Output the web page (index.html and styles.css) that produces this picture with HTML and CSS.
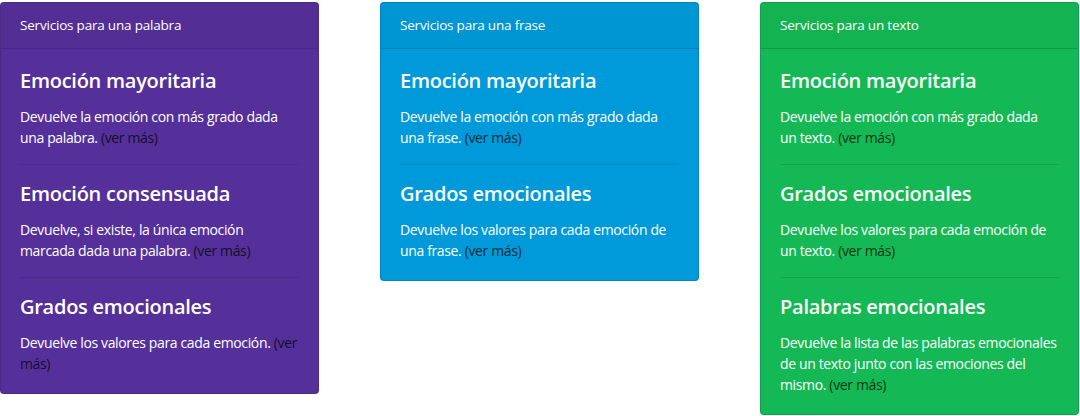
FILE: index.html
```html
<!DOCTYPE html>
<html lang="es">
<head>
<meta charset="utf-8">
<title>Servicios</title>
<link rel="stylesheet" href="styles.css">
</head>
<body>
<div class="row">
  <div class="card card-purple">
    <div class="card-header">Servicios para una palabra</div>
    <div class="card-body">
      <h5 class="card-title">Emoción mayoritaria</h5>
      <p class="card-text">Devuelve la emoción con más grado dada una palabra. <a class="more" href="#">(ver más)</a></p>
      <hr>
      <h5 class="card-title">Emoción consensuada</h5>
      <p class="card-text">Devuelve, si existe, la única emoción marcada dada una palabra. <a class="more" href="#">(ver más)</a></p>
      <hr>
      <h5 class="card-title">Grados emocionales</h5>
      <p class="card-text">Devuelve los valores para cada emoción. <a class="more" href="#">(ver más)</a></p>
    </div>
  </div>
  <div class="card card-blue">
    <div class="card-header">Servicios para una frase</div>
    <div class="card-body">
      <h5 class="card-title">Emoción mayoritaria</h5>
      <p class="card-text">Devuelve la emoción con más grado dada una frase. <a class="more" href="#">(ver más)</a></p>
      <hr>
      <h5 class="card-title">Grados emocionales</h5>
      <p class="card-text">Devuelve los valores para cada emoción de una frase. <a class="more" href="#">(ver más)</a></p>
    </div>
  </div>
  <div class="card card-green">
    <div class="card-header">Servicios para un texto</div>
    <div class="card-body">
      <h5 class="card-title">Emoción mayoritaria</h5>
      <p class="card-text">Devuelve la emoción con más grado dada <span class="nowrap">un texto.</span> <a class="more" href="#">(ver más)</a></p>
      <hr>
      <h5 class="card-title">Grados emocionales</h5>
      <p class="card-text">Devuelve los valores para cada emoción de un texto. <a class="more" href="#">(ver más)</a></p>
      <hr>
      <h5 class="card-title">Palabras emocionales</h5>
      <p class="card-text">Devuelve la lista de las palabras emocionales de un texto junto con las emociones del mismo. <a class="more" href="#">(ver más)</a></p>
    </div>
  </div>
</div>
</body>
</html>
```
FILE: styles.css
```css
* { box-sizing: border-box; }
html, body { margin: 0; padding: 0; background: #fff; }
body {
  font-family: "Open Sans", "Noto Sans", "DejaVu Sans", sans-serif;
  font-size: 14px;
  line-height: 1.5;
  color: #fff;
  padding-top: 2px;
}
.row {
  display: grid;
  grid-template-columns: repeat(3, 319px);
  column-gap: 61px;
  align-items: start;
}
.card {
  border: 1px solid rgba(0,0,0,.125);
  border-radius: 4px;
  overflow: hidden;
}
.card-purple { background: #55309a; }
.card-blue { background: #009ada; }
.card-green { background: #14b955; }
.card-header {
  padding: 12px 19px;
  background: rgba(0,0,0,.03);
  border-bottom: 1px solid rgba(0,0,0,.125);
  font-size: 13.5px;
  letter-spacing: -0.2px;
  line-height: 21px;
}
.card-body {
  padding: 20px 19px 19px;
}
.card-title {
  margin: 0 0 13px;
  font-size: 20px;
  line-height: 24px;
  font-weight: 600;
  letter-spacing: -0.26px;
}
.card-text {
  margin: 0;
  font-size: 14px;
  line-height: 21px;
  letter-spacing: -0.36px;
}
.nowrap { white-space: nowrap; }
.more {
  color: rgba(0,0,0,.75);
  text-decoration: none;
}
hr {
  margin: 16px 0 17px;
  border: 0;
  border-top: 1px solid rgba(0,0,0,.1);
  height: 0;
}
```
